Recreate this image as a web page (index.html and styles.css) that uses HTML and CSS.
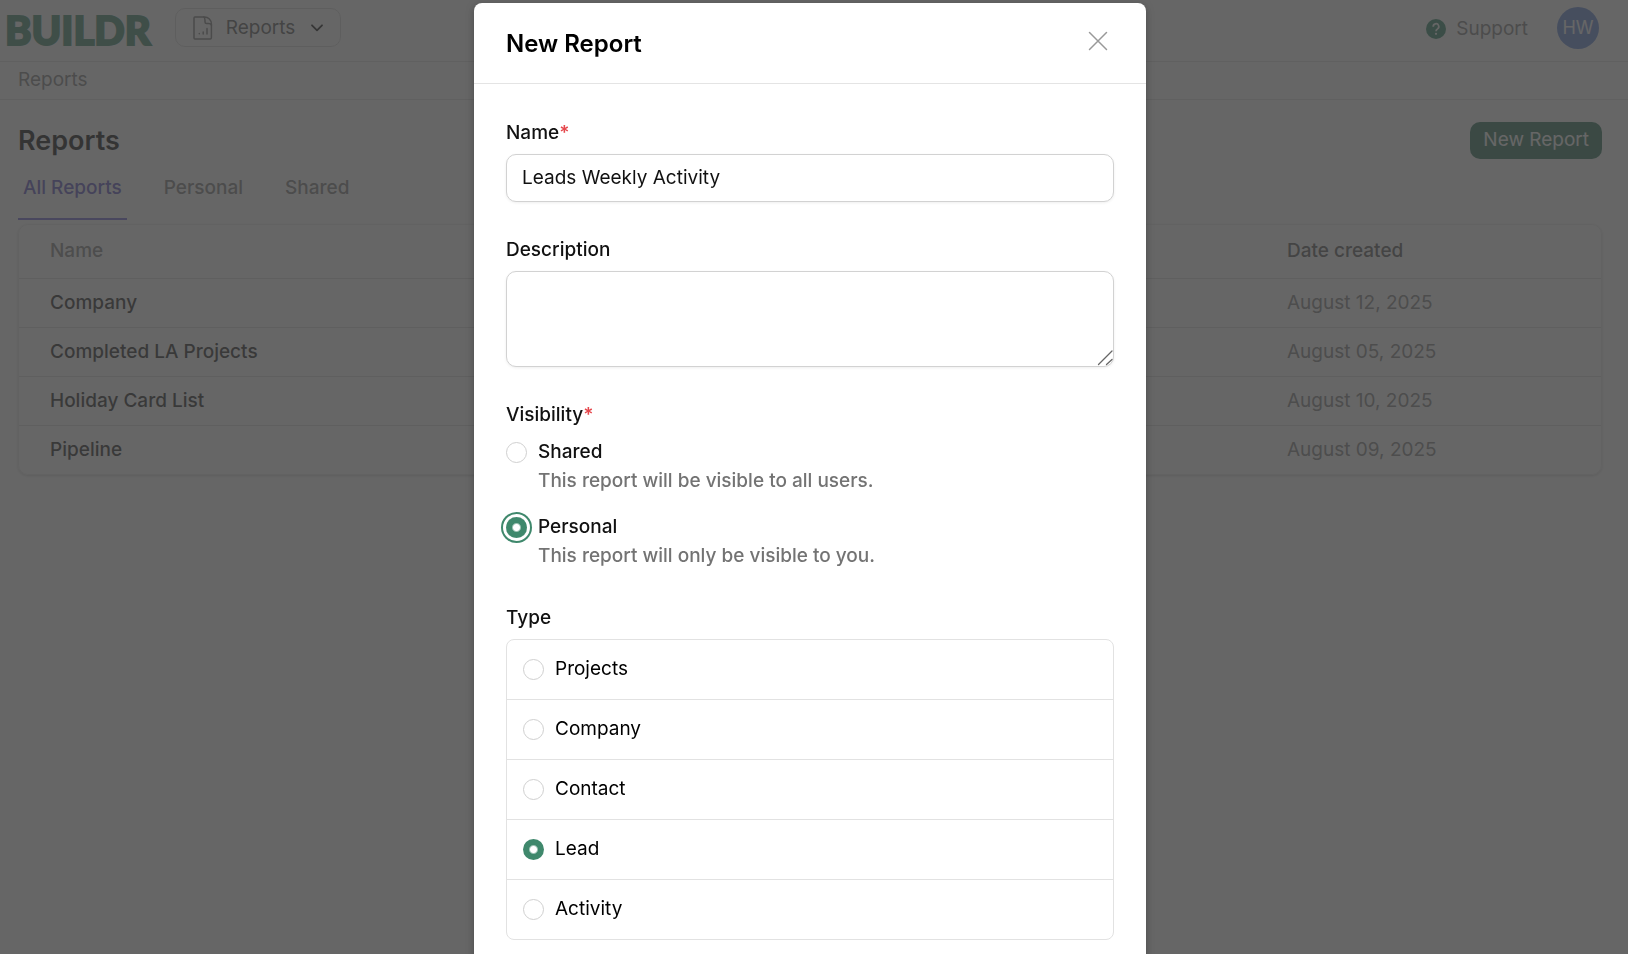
FILE: index.html
```html
<!DOCTYPE html>
<html lang="en">
<head>
<meta charset="utf-8">
<meta name="viewport" content="width=device-width, initial-scale=1">
<title>Reports</title>
<link rel="stylesheet" href="styles.css">
</head>
<body>
<div class="app">
  <header class="topbar">
    <a class="logo" href="#">BUILDR</a>
    <button class="switcher" type="button">
      <svg class="switcher-icon" viewBox="0 0 20 24" width="20" height="24" fill="none" stroke="currentColor" stroke-width="1.5" stroke-linejoin="round" stroke-linecap="round">
        <path d="M1.8 1h9.6c4 0 7 3 7 7v13.800q0 1.200-1.200 1.200H1.800Q1 23 1 22V2Q1 1 1.800 1Z"/>
        <path d="M10.800 1Q12 2 12 4.500V6q0 1.500 1.500 1.500h2Q18 7.500 18.400 9"/>
        <path d="M6.300 17.400v.4M10.200 16v2M14 12.500v5.500"/>
      </svg>
      <span>Reports</span>
      <svg class="switcher-chevron" viewBox="0 0 12 8" width="12" height="8" fill="none" stroke="currentColor" stroke-width="1.800" stroke-linecap="round" stroke-linejoin="round"><path d="M1 1.300l5 5 5-5"/></svg>
    </button>
    <a class="support" href="#">
      <svg viewBox="0 0 20 20" width="20" height="20"><circle cx="10" cy="10" r="10" fill="#2c8463"/><path d="M7.200 7.700a2.800 2.800 0 1 1 4.300 2.200Q10 10.700 10 12.200" fill="none" stroke="#fff" stroke-width="1.700"/><circle cx="10" cy="14.800" r="1.100" fill="#fff"/></svg>
      <span>Support</span>
    </a>
    <button class="avatar" type="button">HW</button>
  </header>
  <nav class="crumbs"><a href="#">Reports</a></nav>
  <main class="page">
    <div class="page-head">
      <h1>Reports</h1>
      <button class="primary" type="button">New Report</button>
    </div>
    <nav class="tabs">
      <a class="tab tab-active" href="#">All Reports</a>
      <a class="tab" href="#">Personal</a>
      <a class="tab" href="#">Shared</a>
    </nav>
    <div class="card">
      <table class="reports">
        <thead><tr><th class="name-col">Name</th><th class="date-col">Date created</th></tr></thead>
        <tbody>
          <tr><td>Company</td><td class="date">August 12, 2025</td></tr>
          <tr><td>Completed LA Projects</td><td class="date">August 05, 2025</td></tr>
          <tr><td>Holiday Card List</td><td class="date">August 10, 2025</td></tr>
          <tr><td>Pipeline</td><td class="date">August 09, 2025</td></tr>
        </tbody>
      </table>
    </div>
  </main>
</div>

<div class="backdrop">
  <form class="modal" role="dialog" aria-labelledby="modal-title">
    <div class="modal-head">
      <h2 id="modal-title">New Report</h2>
      <button class="close" type="button" aria-label="Close">
        <svg viewBox="0 0 20 20" width="20" height="20" stroke="currentColor" stroke-width="1.500" stroke-linecap="round"><path d="M1.500 1.500l17 17M18.500 1.500l-17 17"/></svg>
      </button>
    </div>
    <div class="modal-body">
      <div class="field">
        <label class="label" for="name">Name<span class="required">*</span></label>
        <input class="control" id="name" type="text" value="Leads Weekly Activity">
      </div>
      <div class="field">
        <label class="label" for="description">Description</label>
        <div class="area">
          <textarea class="control" id="description"></textarea>
          <svg class="grip" viewBox="0 0 16 16" width="16" height="16" stroke="#666" stroke-width="1.300" stroke-linecap="round"><path d="M1.500 14.500l13.500-13.500M9.500 14.500l5.500-5"/></svg>
        </div>
      </div>
      <fieldset class="field visibility">
        <legend class="label">Visibility<span class="required">*</span></legend>
        <label class="choice"><input class="radio" type="radio" name="visibility"><span class="choice-text"><span>Shared</span><span class="hint">This report will be visible to all users.</span></span></label>
        <label class="choice"><input class="radio radio-focus" type="radio" name="visibility" checked><span class="choice-text"><span>Personal</span><span class="hint">This report will only be visible to you.</span></span></label>
      </fieldset>
      <fieldset class="field">
        <legend class="label">Type</legend>
        <div class="types">
          <label class="type"><input class="radio" type="radio" name="type">Projects</label>
          <label class="type"><input class="radio" type="radio" name="type">Company</label>
          <label class="type"><input class="radio" type="radio" name="type">Contact</label>
          <label class="type"><input class="radio" type="radio" name="type" checked>Lead</label>
          <label class="type"><input class="radio" type="radio" name="type">Activity</label>
        </div>
      </fieldset>
    </div>
  </form>
</div>
</body>
</html>
```
FILE: styles.css
```css
* { box-sizing: border-box; }

body {
  margin: 0;
  height: 100vh;
  overflow: hidden;
  background: #fff;
  color: #111;
  font: 400 19px/28px Inter, "Liberation Sans", sans-serif;
}

button, input, textarea { font: inherit; color: inherit; }
button { cursor: pointer; }
a { color: inherit; text-decoration: none; }
h1, h2 { margin: 0; }
fieldset { border: 0; margin: 0; padding: 0; min-width: 0; }
svg { display: block; flex: none; }

/* Top bar */
.topbar {
  display: flex;
  align-items: center;
  height: 62px;
  padding: 0 29px 6px 5px;
  border-bottom: 1px solid #e0e0e0;
}
.logo {
  padding-top: 4px;
  color: #3f886c;
  font: 900 40px/48px Lato, sans-serif;
  -webkit-text-stroke: 2px #3f886c;
}
.switcher {
  display: flex;
  align-items: center;
  height: 39px;
  margin-left: 24px;
  padding: 0 17px;
  border: 1px solid #d8d8d8;
  border-radius: 10px;
  background: none;
  color: #555;
}
.switcher-icon { margin-right: 13px; color: #777; }
.switcher-chevron { margin-left: 16px; color: #111; }
.support {
  display: flex;
  align-items: center;
  gap: 10px;
  margin-left: auto;
  padding-top: 2px;
  color: #7d7d7d;
}
.avatar {
  width: 42px;
  height: 42px;
  margin-left: 29px;
  padding: 0;
  border: 0;
  border-radius: 50%;
  background: #6187d8;
  color: #fff;
  font-size: 18px;
}

.crumbs {
  height: 38px;
  padding: 4px 18px;
  border-bottom: 1px solid #e0e0e0;
  color: #7d7d7d;
}

/* Reports list */
.page { padding: 22px 26px 0 18px; }
.page-head {
  display: flex;
  align-items: center;
  justify-content: space-between;
}
h1 { font-size: 27px; line-height: 36px; font-weight: 600; color: #050505; }
.primary {
  height: 37px;
  padding: 0 13px 2px;
  border: 0;
  border-radius: 10px;
  background: #2c7058;
  color: #fff;
}
.tabs {
  display: flex;
  gap: 32px;
  margin-bottom: 4px;
  font-weight: 500;
  color: #7d7d7d;
}
.tab { height: 61px; padding: 15px 5px 0; border-bottom: 2px solid transparent; }
.tab-active { color: #5a4fc0; border-color: #7064d4; }
.card {
  overflow: hidden;
  border: 1px solid #ececec;
  border-radius: 10px;
  box-shadow: 0 1px 3px #0003;
}
.reports { width: 100%; border-collapse: collapse; table-layout: fixed; }
.reports th { height: 53px; padding: 0 31px 1px; font-weight: 500; text-align: left; color: #808080; }
.reports td { height: 49px; padding: 0 31px; font-weight: 500; color: #222; border-top: 1px solid #dcdcdc; }
.reports .date-col { width: 345px; color: #555; }
.reports .date { font-weight: 400; color: #808080; }

/* Dialog */
.backdrop {
  position: fixed;
  inset: 0;
  display: flex;
  align-items: flex-start;
  justify-content: center;
  padding: 3px 8px 0 0;
  overflow: hidden;
  background: rgba(64, 64, 64, .8);
}
.modal {
  width: 672px;
  max-width: 100%;
  border-radius: 8px;
  background: #fff;
  box-shadow: 0 2px 8px #0004;
}
.modal-head {
  display: flex;
  align-items: center;
  justify-content: space-between;
  padding: 23px 38px 21px 32px;
  border-bottom: 1px solid #e4e4e4;
}
h2 { font-size: 24px; line-height: 36px; font-weight: 600; color: #000; }
.close { padding: 0 0 6px; border: 0; background: none; color: #999; }
.modal-body {
  display: flex;
  flex-direction: column;
  gap: 34px;
  padding: 35px 32px 32px;
}
.label { display: block; padding: 0; margin-bottom: 7px; font-weight: 500; }
.required { color: #e5484d; font-weight: 600; }
.control {
  display: block;
  width: 100%;
  height: 48px;
  padding: 0 15px 2px;
  border: 1px solid #d2d2d2;
  border-radius: 10px;
  background: #fff;
  box-shadow: 0 1px 3px #0001;
  outline: 0;
}
.area { position: relative; }
.area .control { height: 96px; padding: 10px 15px; resize: none; }
.grip { position: absolute; right: 1px; bottom: 1px; }
.choice { display: flex; gap: 11px; font-weight: 500; }
.choice + .choice { margin-top: 18px; }
.choice .radio { margin-top: 4px; }
.choice-text { display: flex; flex-direction: column; gap: 1px; }
.hint { color: #737373; }
.radio {
  appearance: none;
  flex: none;
  width: 21px;
  height: 21px;
  margin: 0;
  border: 1px solid #d0d0d0;
  border-radius: 50%;
  background: #fff;
}
.radio:checked {
  border: 0;
  background: radial-gradient(circle, #fff 0 3px, #3f886c 5px);
}
.radio-focus:checked { box-shadow: 0 0 0 3px #fff, 0 0 0 5px #3f886c; }
.visibility .label { margin-bottom: 9px; }
.types { border: 1px solid #e2e2e2; border-radius: 8px; color: #000; }
.type {
  display: flex;
  align-items: center;
  gap: 11px;
  padding: 15px 16px 16px;
}
.type + .type { border-top: 1px solid #e2e2e2; }
```
